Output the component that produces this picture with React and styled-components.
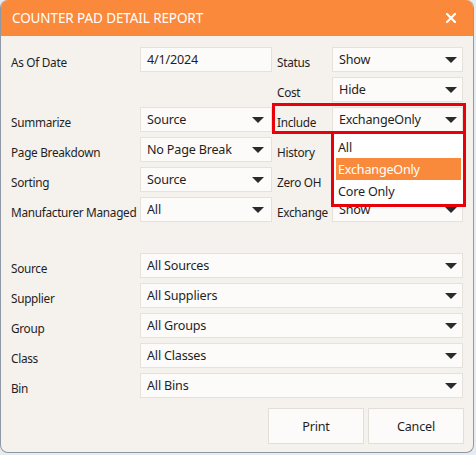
import React from 'react'
import styled, { createGlobalStyle } from 'styled-components'

const GlobalStyle = createGlobalStyle`
  body {
    margin: 0;
    background: #e7ecf0;
    font-family: "Noto Sans", "Open Sans", sans-serif;
    color: #1f1f1f;
  }
  * { box-sizing: border-box; }
`

const Dialog = styled.div`
  position: relative;
  width: 474px;
  height: 453px;
  background: #f5f1ec;
  border: 1px solid #8e99a5;
  border-top: none;
  border-radius: 8px;
  overflow: hidden;
  display: flex;
  flex-direction: column;
`

const Header = styled.div`
  height: 36px;
  background: #fa893b;
  display: flex;
  align-items: center;
  justify-content: space-between;
  padding: 0 17px 0 11px;
  color: #fff;
`

const Title = styled.div`
  font-size: 13.5px;
  letter-spacing: -0.1px;
`

const Body = styled.div`
  padding: 11px 10px 0 10px;
  display: flex;
  flex-direction: column;
`

const TopGrid = styled.div`
  display: grid;
  grid-template-columns: 129px 132px 60px 131px;
  grid-auto-rows: 25px;
  row-gap: 5px;
`

const BottomGrid = styled.div`
  display: grid;
  grid-template-columns: 129px 323px;
  grid-auto-rows: 25px;
  row-gap: 5px;
  margin-top: 31px;
`

const Label = styled.div`
  display: flex;
  align-items: center;
  padding-top: 5px;
  padding-left: ${p => (p.right ? '5px' : '0')};
  font-size: 11.8px;
  letter-spacing: -0.3px;
  white-space: nowrap;
`

const Field = styled.div`
  position: relative;
  display: flex;
  align-items: center;
  background: #fdfbf9;
  border: 1px solid #e6e1db;
  padding: 0 24px 0 6px;
  font-size: 12.6px;
  letter-spacing: -0.2px;
  white-space: nowrap;
  overflow: hidden;
`

const Arrow = styled.span`
  position: absolute;
  right: ${p => (p.wide ? '5px' : '7px')};
  top: 9px;
  width: 0;
  height: 0;
  border-left: 6px solid transparent;
  border-right: 6px solid transparent;
  border-top: 6px solid #2b2b2b;
`

const Buttons = styled.div`
  display: flex;
  justify-content: flex-end;
  gap: 4px;
  margin: 10px -1px 0 0;
`

const Button = styled.button`
  width: 96px;
  height: 36px;
  background: #fdfbf9;
  border: 1px solid #e3ded8;
  font-family: inherit;
  font-size: 12.6px;
  letter-spacing: -0.2px;
  color: #1f1f1f;
`

const Highlight = styled.div`
  position: absolute;
  left: 271px;
  top: 103px;
  width: 194px;
  height: 31px;
  border: 3px solid #e8000b;
  pointer-events: none;
`

const Menu = styled.div`
  position: absolute;
  left: 330px;
  top: 131px;
  width: 135px;
  height: 76px;
  border: 3px solid #e8000b;
  background: #fff;
  padding: 2px;
`

const Option = styled.div`
  height: 22px;
  display: flex;
  align-items: center;
  padding-left: 2px;
  font-size: 12.6px;
  letter-spacing: -0.2px;
  background: ${p => (p.active ? '#f98a3c' : 'transparent')};
  color: ${p => (p.active ? '#fff' : '#1f1f1f')};
`

const Close = () => (
  <svg width="10" height="10" viewBox="0 0 10 10">
    <path d="M1 1L9 9M9 1L1 9" stroke="#fff" strokeWidth="2.2" strokeLinecap="square" />
  </svg>
)

const Select = ({ value, wide }) => (
  <Field>
    {value}
    <Arrow wide={wide} />
  </Field>
)

const App = () => (
  <>
    <GlobalStyle />
    <Dialog>
      <Header>
        <Title>COUNTER PAD DETAIL REPORT</Title>
        <Close />
      </Header>
      <Body>
        <TopGrid>
          <Label>As Of Date</Label>
          <Field>4/1/2024</Field>
          <Label right>Status</Label>
          <Select value="Show" wide />

          <div />
          <div />
          <Label right>Cost</Label>
          <Select value="Hide" wide />

          <Label>Summarize</Label>
          <Select value="Source" />
          <Label right>Include</Label>
          <Select value="ExchangeOnly" wide />

          <Label>Page Breakdown</Label>
          <Select value="No Page Break" />
          <Label right>History</Label>
          <Select value="" wide />

          <Label>Sorting</Label>
          <Select value="Source" />
          <Label right>Zero OH</Label>
          <Select value="" wide />

          <Label>Manufacturer Managed</Label>
          <Select value="All" />
          <Label right>Exchange</Label>
          <Select value="Show" wide />
        </TopGrid>

        <BottomGrid>
          <Label>Source</Label>
          <Select value="All Sources" wide />
          <Label>Supplier</Label>
          <Select value="All Suppliers" wide />
          <Label>Group</Label>
          <Select value="All Groups" wide />
          <Label>Class</Label>
          <Select value="All Classes" wide />
          <Label>Bin</Label>
          <Select value="All Bins" wide />
        </BottomGrid>

        <Buttons>
          <Button>Print</Button>
          <Button>Cancel</Button>
        </Buttons>
      </Body>

      <Highlight />
      <Menu>
        <Option>All</Option>
        <Option active>ExchangeOnly</Option>
        <Option>Core Only</Option>
      </Menu>
    </Dialog>
  </>
)

export default App
